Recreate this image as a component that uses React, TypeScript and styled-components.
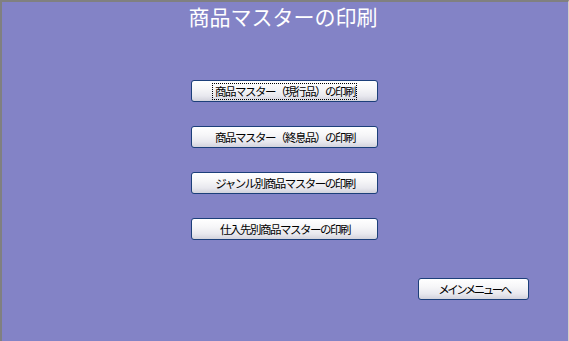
import React from "react";
import styled, { createGlobalStyle } from "styled-components";

const Global = createGlobalStyle`
  html, body { margin: 0; padding: 0; }
  body { background: #8383c6; }
`;

const Frame = styled.div`
  box-sizing: border-box;
  width: 569px;
  height: 341px;
  background: #8383c6;
  border-top: 2px solid #808080;
  border-left: 2px solid #808080;
  border-right: 1px solid #d4d0c8;
  display: flex;
  flex-direction: column;
  align-items: center;
  font-family: "Noto Sans CJK JP", "Liberation Sans", sans-serif;
`;

const Title = styled.h1`
  margin: 0 0 0 -4px;
  font-size: 21px;
  font-weight: normal;
  line-height: 28px;
  color: #ffffff;
`;

const ButtonList = styled.div`
  margin-top: 50px;
  margin-left: -1px;
  display: flex;
  flex-direction: column;
  gap: 24px;
`;

const Button = styled.button<{ $w: number }>`
  box-sizing: border-box;
  width: ${(p) => p.$w}px;
  height: 22px;
  padding: 0;
  border: 1px solid #1c3f7a;
  border-radius: 3px;
  background: linear-gradient(#ffffff 0%, #f6f6f8 40%, #e8e8ee 75%, #d2d2dc 100%);
  color: #000000;
  font-family: "Noto Sans CJK JP", "Liberation Sans", sans-serif;
  font-size: 11.5px;
  line-height: 20px;
  display: flex;
  align-items: center;
  justify-content: center;
`;

const Label = styled.span<{ $focused?: boolean; $ls: number }>`
  padding: 0 1px 0 2px;
  line-height: 15px;
  letter-spacing: ${(p) => p.$ls}px;
  outline: ${(p) => (p.$focused ? "1px dotted #000" : "none")};
`;

const Footer = styled.div`
  align-self: stretch;
  display: flex;
  justify-content: flex-end;
  padding-right: 39px;
  margin-top: 38px;
`;

export default function App() {
  const items = [
    "商品マスター（現行品）の印刷",
    "商品マスター（終息品）の印刷",
    "ジャンル別商品マスターの印刷",
    "仕入先別商品マスターの印刷",
  ];
  return (
    <>
      <Global />
      <Frame>
        <Title>商品マスターの印刷</Title>
        <ButtonList>
          {items.map((t, i) => (
            <Button key={t} $w={187}>
              <Label $focused={i === 0} $ls={-1.5}>
                {t}
              </Label>
            </Button>
          ))}
        </ButtonList>
        <Footer>
          <Button $w={111}>
            <Label $ls={-2.5}>メインメニューへ</Label>
          </Button>
        </Footer>
      </Frame>
    </>
  );
}
